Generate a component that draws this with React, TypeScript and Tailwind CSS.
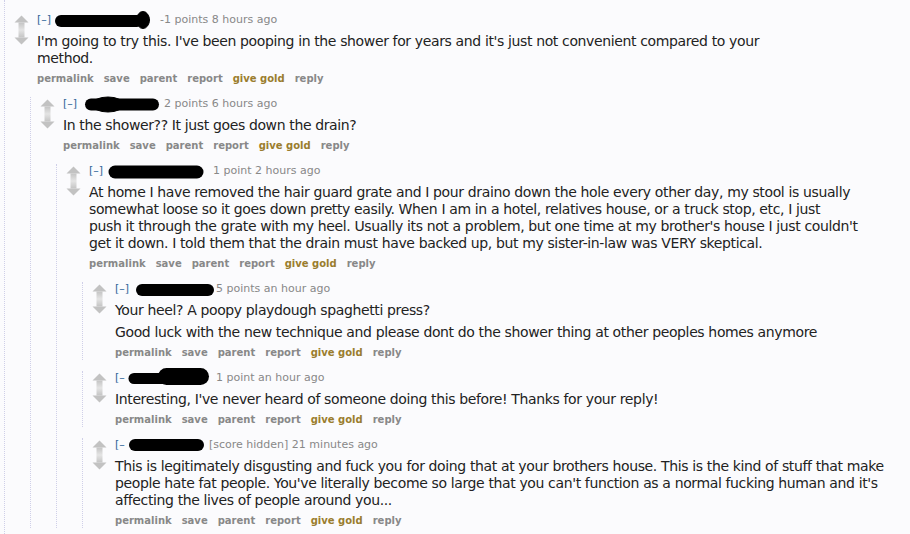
import React, { useId } from "react";

function UpArrow() {
  const id = useId();
  return (
    <svg width="15" height="15" viewBox="0 0 15 15" className="block">
      <defs>
        <linearGradient id={id} x1="0" y1="0" x2="0" y2="1">
          <stop offset="0" stopColor="#c4c4c4" />
          <stop offset="1" stopColor="#e4e4e4" />
        </linearGradient>
      </defs>
      <polygon points="7.5,0.5 14.5,7.5 0.5,7.5" fill="#c2c2c2" />
      <rect x="4.5" y="7.5" width="6" height="7.5" fill={`url(#${id})`} />
    </svg>
  );
}

function DownArrow() {
  const id = useId();
  return (
    <svg width="15" height="15" viewBox="0 0 15 15" className="block">
      <defs>
        <linearGradient id={id} x1="0" y1="0" x2="0" y2="1">
          <stop offset="0" stopColor="#e4e4e4" />
          <stop offset="1" stopColor="#c4c4c4" />
        </linearGradient>
      </defs>
      <rect x="4.5" y="0" width="6" height="7.5" fill={`url(#${id})`} />
      <polygon points="0.5,7.5 14.5,7.5 7.5,14.5" fill="#c2c2c2" />
    </svg>
  );
}

function Blob({ w, children, className }: { w: number; children: React.ReactNode; className: string }) {
  return (
    <svg width={w} height="20" viewBox={`0 0 ${w} 20`} className={`block shrink-0 overflow-visible ${className}`}>
      <g fill="#000" stroke="#000" strokeLinecap="round" strokeLinejoin="round">
        {children}
      </g>
    </svg>
  );
}

type Props = {
  expand: string;
  expandW: string;
  blob: React.ReactNode;
  meta: string;
  metaMl: string;
  paras: string[][];
  children?: React.ReactNode;
  className?: string;
};

function Buttons() {
  return (
    <div className="mt-[5px] flex gap-[10px] text-[10px] font-bold leading-[14px] text-[#888]">
      <span>permalink</span>
      <span>save</span>
      <span>parent</span>
      <span>report</span>
      <span className="text-[#9a7d2e]">give gold</span>
      <span>reply</span>
    </div>
  );
}

function Comment({ expand, expandW, blob, meta, metaMl, paras, children, className = "" }: Props) {
  return (
    <div className={`border-l border-dotted border-[#cfcfe8] ${className}`}>
      <div className="flex">
        <div className="ml-[9px] mt-[2px] w-[15px] shrink-0">
          <UpArrow />
          <DownArrow />
        </div>
        <div className="ml-[8px]">
          <div className="flex h-[14px] items-center text-[11px] leading-[14px] whitespace-nowrap">
            <span className={`${expandW} shrink-0 text-[#369]`}>{expand}</span>
            {blob}
            <span className={`${metaMl} text-[#888]`}>{meta}</span>
          </div>
          <div className="mt-[6px] flex flex-col gap-[5px] text-[14px] leading-[17px] tracking-[-0.37px] text-[#222]">
            {paras.map((p, i) => (
              <div key={i}>
                {p.map((l, j) => (
                  <div key={j} className="whitespace-nowrap">
                    {l}
                  </div>
                ))}
              </div>
            ))}
          </div>
          <Buttons />
        </div>
      </div>
      {children && <div className="ml-[25px] mt-[11px] flex flex-col gap-[11px]">{children}</div>}
    </div>
  );
}

export default function App() {
  return (
    <div className="h-[534px] w-[910px] overflow-hidden bg-[#fbfbfd] font-['DejaVu_Sans',Verdana,sans-serif]">
      <Comment
        className="ml-[4px] pt-[13px] pb-[20px]"
        expand="[–]"
        expandW="w-[18px]"
        blob={
          <Blob w={95} className="ml-[0px]">
            <line x1="6" y1="11" x2="82" y2="11" strokeWidth="12" />
            <ellipse cx="88" cy="10" rx="6.5" ry="8.5" />
          </Blob>
        }
        meta="-1 points 8 hours ago"
        metaMl="ml-[10px]"
        paras={[
          [
            "I'm going to try this. I've been pooping in the shower for years and it's just not convenient compared to your",
            "method.",
          ],
        ]}
      >
        <Comment
          expand="[–]"
          expandW="w-[18px]"
          blob={
            <Blob w={75} className="ml-[3px]">
              <line x1="7" y1="10.5" x2="69" y2="10.5" strokeWidth="12" />
              <ellipse cx="24" cy="10.5" rx="16" ry="7.5" />
            </Blob>
          }
          meta="2 points 6 hours ago"
          metaMl="ml-[5px]"
          paras={[["In the shower?? It just goes down the drain?"]]}
        >
          <Comment
            expand="[–]"
            expandW="w-[18px]"
            blob={
              <Blob w={96} className="ml-[1px]">
                <line x1="7" y1="11" x2="89" y2="11" strokeWidth="13" />
              </Blob>
            }
            meta="1 point 2 hours ago"
            metaMl="ml-[9px]"
            paras={[
              [
                "At home I have removed the hair guard grate and I pour draino down the hole every other day, my stool is usually",
                "somewhat loose so it goes down pretty easily. When I am in a hotel, relatives house, or a truck stop, etc, I just",
                "push it through the grate with my heel. Usually its not a problem, but one time at my brother's house I just couldn't",
                "get it down. I told them that the drain must have backed up, but my sister-in-law was VERY skeptical.",
              ],
            ]}
          >
            <Comment
              expand="[–]"
              expandW="w-[18px]"
              blob={
                <Blob w={78} className="ml-[3px]">
                  <line x1="6" y1="11" x2="72" y2="11" strokeWidth="12" />
                </Blob>
              }
              meta="5 points an hour ago"
              metaMl="ml-[2px]"
              paras={[
                ["Your heel? A poopy playdough spaghetti press?"],
                ["Good luck with the new technique and please dont do the shower thing at other peoples homes anymore"],
              ]}
            />
            <Comment
              expand="[–"
              expandW="w-[12px]"
              blob={
                <Blob w={81} className="ml-[1px]">
                  <line x1="6" y1="10.5" x2="40" y2="10.5" strokeWidth="11" />
                  <rect x="30" y="0" width="51" height="17" rx="8.5" strokeWidth="0" />
                </Blob>
              }
              meta="1 point an hour ago"
              metaMl="ml-[7px]"
              paras={[["Interesting, I've never heard of someone doing this before! Thanks for your reply!"]]}
            />
            <Comment
              expand="[–"
              expandW="w-[12px]"
              blob={
                <Blob w={75} className="ml-[2px]">
                  <line x1="6" y1="10" x2="69" y2="10" strokeWidth="12" />
                </Blob>
              }
              meta="[score hidden] 21 minutes ago"
              metaMl="ml-[5px]"
              paras={[
                [
                  "This is legitimately disgusting and fuck you for doing that at your brothers house. This is the kind of stuff that make",
                  "people hate fat people. You've literally become so large that you can't function as a normal fucking human and it's",
                  "affecting the lives of people around you...",
                ],
              ]}
            />
          </Comment>
        </Comment>
      </Comment>
    </div>
  );
}
